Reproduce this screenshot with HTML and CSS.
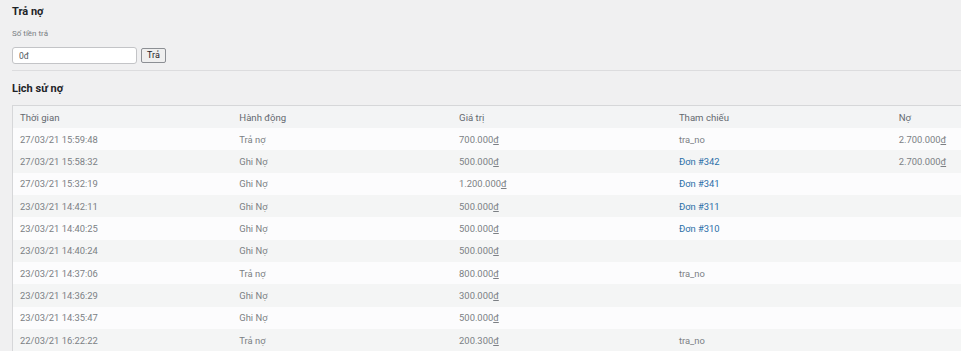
FILE: index.html
```html
<!DOCTYPE html>
<html lang="vi">
<head>
<meta charset="utf-8">
<title>Trả nợ</title>
<link rel="stylesheet" href="styles.css">
</head>
<body>
<div class="page">
  <section class="pay">
    <h2 class="title">Trả nợ</h2>
    <label class="label" for="amt">Số tiền trả</label>
    <div class="form-row">
      <input id="amt" class="input" type="text" value="0đ">
      <button class="btn" type="button">Trả</button>
    </div>
  </section>
  <hr class="divider">
  <h2 class="title title-history">Lịch sử nợ</h2>
  <table class="history">
    <thead>
      <tr><th>Thời gian</th><th>Hành động</th><th>Giá trị</th><th>Tham chiếu</th><th>Nợ</th></tr>
    </thead>
    <tbody>
      <tr><td>27/03/21 15:59:48</td><td>Trả nợ</td><td>700.000<u>đ</u></td><td>tra_no</td><td>2.700.000<u>đ</u></td></tr>
      <tr><td>27/03/21 15:58:32</td><td>Ghi Nợ</td><td>500.000<u>đ</u></td><td><a href="#">Đơn #342</a></td><td>2.700.000<u>đ</u></td></tr>
      <tr><td>27/03/21 15:32:19</td><td>Ghi Nợ</td><td>1.200.000<u>đ</u></td><td><a href="#">Đơn #341</a></td><td></td></tr>
      <tr><td>23/03/21 14:42:11</td><td>Ghi Nợ</td><td>500.000<u>đ</u></td><td><a href="#">Đơn #311</a></td><td></td></tr>
      <tr><td>23/03/21 14:40:25</td><td>Ghi Nợ</td><td>500.000<u>đ</u></td><td><a href="#">Đơn #310</a></td><td></td></tr>
      <tr><td>23/03/21 14:40:24</td><td>Ghi Nợ</td><td>500.000<u>đ</u></td><td></td><td></td></tr>
      <tr><td>23/03/21 14:37:06</td><td>Trả nợ</td><td>800.000<u>đ</u></td><td>tra_no</td><td></td></tr>
      <tr><td>23/03/21 14:36:29</td><td>Ghi Nợ</td><td>300.000<u>đ</u></td><td></td><td></td></tr>
      <tr><td>23/03/21 14:35:47</td><td>Ghi Nợ</td><td>500.000<u>đ</u></td><td></td><td></td></tr>
      <tr><td>22/03/21 16:22:22</td><td>Trả nợ</td><td>200.300<u>đ</u></td><td>tra_no</td><td></td></tr>
    </tbody>
  </table>
</div>
</body>
</html>
```

FILE: styles.css
```css
html, body {
  margin: 0;
  padding: 0;
  overflow: hidden;
  background: #f0f0f1;
  font-family: Roboto, "Noto Sans", "Liberation Sans", sans-serif;
}

.page {
  padding: 5px 0 0 12px;
}

.title {
  margin: 0;
  font-size: 11px;
  line-height: 14px;
  font-weight: 700;
  color: #1d2327;
}

.label {
  display: block;
  margin-top: 10px;
  font-size: 8px;
  line-height: 10px;
  color: #7a7e83;
}

.form-row {
  display: flex;
  align-items: center;
  gap: 4px;
  margin-top: 8px;
}

.input {
  box-sizing: border-box;
  width: 125px;
  height: 17px;
  margin: 0;
  padding: 0 6px;
  border: 1px solid #c3c4c7;
  border-radius: 3px;
  background: #fff;
  font-family: inherit;
  font-size: 8.5px;
  color: #50575e;
}

.btn {
  box-sizing: border-box;
  height: 15px;
  margin: 0;
  padding: 0 5px;
  border: 1px solid #8c8f94;
  border-radius: 2px;
  background: #efefef;
  font-family: inherit;
  font-size: 9px;
  line-height: 13px;
  color: #1d2327;
}

.divider {
  margin: 6px 0 0 0;
  border: 0;
  border-top: 1px solid #dcdcde;
}

.title-history {
  margin-top: 11px;
}

.history {
  margin-top: 9px;
  width: 1100px;
  table-layout: fixed;
  border-collapse: collapse;
  border: 1px solid #d6d7d9;
  font-size: 9.4px;
  color: #7b7f84;
}

.history th,
.history td {
  text-align: left;
  font-weight: 400;
  padding: 0 7px;
  white-space: nowrap;
}

.history th {
  height: 22px;
  background: #f3f4f5;
  color: #646970;
  font-size: 9.6px;
}

.history td {
  height: 22.33px;
}

.history tbody tr:nth-child(odd) {
  background: #fcfcfd;
}

.history tbody tr:nth-child(even) {
  background: #f4f5f5;
}

.history u {
  text-decoration: underline;
  text-underline-offset: 1px;
}

.history a {
  color: #2b6fa8;
  text-decoration: none;
}
```
